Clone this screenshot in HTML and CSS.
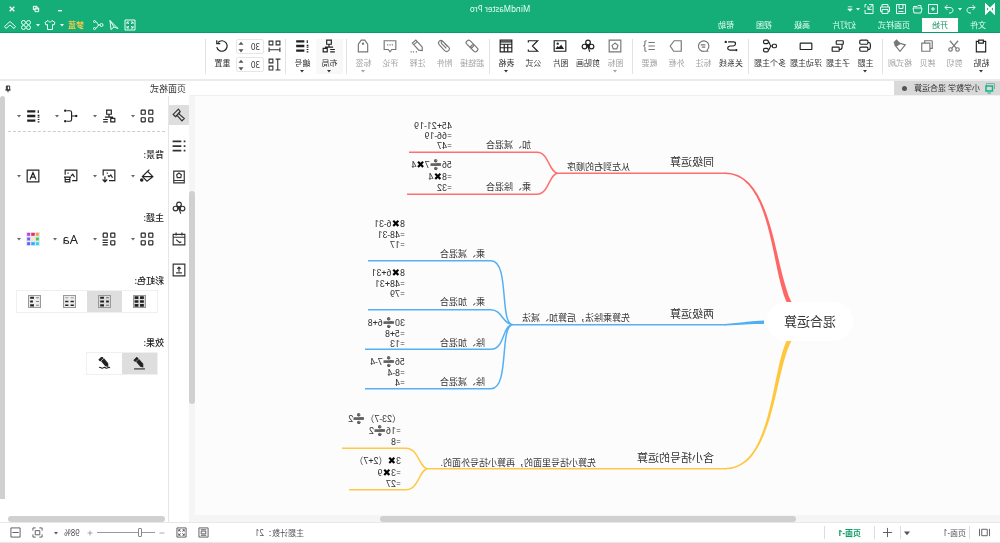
FILE: index.html
```html
<!DOCTYPE html>
<html lang="zh-CN">
<head>
<meta charset="utf-8">
<title>MindMaster Pro</title>
<link rel="stylesheet" href="styles.css">
</head>
<body>
<svg class="sprite" aria-hidden="true">
  <symbol id="caret" viewBox="0 0 8 8"><path d="M0 2h8L4 7z" fill="currentColor" stroke="none"/></symbol>
  <symbol id="logo" viewBox="0 0 24 24"><path d="M4 20V4l8 8 8-8v16l-8-8z" stroke-width="4"/></symbol>
  <symbol id="undo" viewBox="0 0 24 24"><path d="M9 4 4 9l5 5M4 9h10c8 0 8 11 0 11h-2"/></symbol>
  <symbol id="redo" viewBox="0 0 24 24"><path d="m15 4 5 5-5 5M20 9H10c-8 0-8 11 0 11h2"/></symbol>
  <symbol id="new" viewBox="0 0 24 24"><path d="M3 3h18v18H3zM12 8v8M8 12h8"/></symbol>
  <symbol id="open" viewBox="0 0 24 24"><path d="M4 9V5h6l2 2h7v2M2 10h18l-2 10H4z"/></symbol>
  <symbol id="save" viewBox="0 0 24 24"><path d="M3 3h18v18H3zM8 3v8h8V3M7 17h10"/></symbol>
  <symbol id="print" viewBox="0 0 24 24"><path d="M6 8V3h12v5M6 17H3V8h18v9h-3M6 13h12v8H6z"/></symbol>
  <symbol id="export" viewBox="0 0 24 24"><path d="M12 3H4v18h16v-7M5 4l9 9M14 6v7H7M17 3h3v6"/></symbol>
  <symbol id="more" viewBox="0 0 8 8"><path d="M1 1h6M1 4h6L4 7z" fill="currentColor" stroke-width="1"/></symbol>
  <symbol id="min" viewBox="0 0 24 24"><path d="M6 17h12" stroke-width="4"/></symbol>
  <symbol id="restore" viewBox="0 0 24 24"><path d="M9 9V4h11v10h-5M4 9h11v11H4zM4 12h11" stroke-width="3"/></symbol>
  <symbol id="close" viewBox="0 0 24 24"><path d="m5 5 14 14M19 5 5 19" stroke-width="4"/></symbol>
  <symbol id="frame" viewBox="0 0 24 24"><path d="M2 2h20v20H2zM6 10V6h4M14 6h4v4M18 14v4h-4M10 18H6v-4M6 6l4 4M18 6l-4 4M18 18l-4-4M6 18l4-4"/></symbol>
  <symbol id="send" viewBox="0 0 24 24"><path d="M20 3 18 21l-6-5-8 3zM20 3l-8 13"/></symbol>
  <symbol id="share" viewBox="0 0 24 24"><circle cx="5" cy="12" r="3"/><circle cx="19" cy="5" r="2"/><circle cx="19" cy="19" r="2"/><path d="M8 12h2c4 0 3-7 7-7M10 12c4 0 3 7 7 7"/></symbol>
  <symbol id="shirt" viewBox="0 0 24 24"><path d="M8 3 2 7l2 5 3-1v10h10V11l3 1 2-5-6-4c-2 4-6 4-8 0z"/></symbol>
  <symbol id="apps" viewBox="0 0 24 24"><circle cx="7" cy="7" r="4"/><circle cx="17" cy="7" r="4"/><circle cx="7" cy="17" r="4"/><circle cx="17" cy="17" r="4"/></symbol>
  <symbol id="up" viewBox="0 0 24 24"><path d="m1 15 11-10 11 10-3 4-8-7-8 7z"/></symbol>

  <symbol id="paste" viewBox="0 0 24 24"><path d="M8 4H4v18h16V4h-4M8 2h8v5H8z"/></symbol>
  <symbol id="cut" viewBox="0 0 24 24"><circle cx="6" cy="18" r="3"/><circle cx="18" cy="18" r="3"/><path d="M8 16 19 3M16 16 5 3"/></symbol>
  <symbol id="copy" viewBox="0 0 24 24"><path d="M3 3h13v3M3 3v13h3M7 7h14v14H7z"/></symbol>
  <symbol id="painter" viewBox="0 0 24 24"><path d="m3 10 9 11 9-11-5-3-6 1z"/><path d="m12 8 6-6 4 4-4 6z" fill="currentColor"/></symbol>
  <symbol id="topic" viewBox="0 0 24 24"><rect x="7" y="2" width="14" height="7" rx="2"/><rect x="7" y="14" width="14" height="7" rx="2"/><path d="M7 6H5c-3 0-3 12 0 12h2"/></symbol>
  <symbol id="subtopic" viewBox="0 0 24 24"><rect x="3" y="3" width="12" height="6" rx="1"/><rect x="10" y="14" width="12" height="7" rx="1"/><path d="M5 9v5c0 3 2 4 5 4"/></symbol>
  <symbol id="float" viewBox="0 0 24 24"><rect x="2" y="7" width="20" height="11" rx="1"/></symbol>
  <symbol id="multi" viewBox="0 0 24 24"><rect x="1" y="9" width="7" height="6" rx="2"/><rect x="15" y="2" width="8" height="6" rx="2"/><rect x="15" y="16" width="8" height="6" rx="2"/><path d="M8 12h2c3 0 2-7 5-7M10 12c3 0 2 7 5 7"/></symbol>
  <symbol id="relation" viewBox="0 0 24 24"><path d="M7 5h9c5 0 5 6 0 7h-5c-6 0-6 7-1 7h9" transform="matrix(-1 0 0 1 24 0)"/><circle cx="21" cy="5" r="2" fill="currentColor" stroke="none"/><circle cx="3" cy="19" r="2" fill="currentColor" stroke="none"/></symbol>
  <symbol id="callout" viewBox="0 0 24 24"><path d="M5 19a9 9 0 1 1 4 2H4zM8 10h8M8 14h6"/></symbol>
  <symbol id="boundary" viewBox="0 0 24 24"><path d="M3 3h12l7 9-6 9H3z"/></symbol>
  <symbol id="summary" viewBox="0 0 24 24"><path d="M2 6h11M2 12h11M2 18h11M16 3c4 0 3 2 3 6 0 2 1 3 3 3-2 0-3 1-3 3 0 4 1 6-3 6"/></symbol>
  <symbol id="mark" viewBox="0 0 24 24"><path d="M2 2h20v20H2zM12 7l5 4-2 6H9l-2-6z"/></symbol>
  <symbol id="clover" viewBox="0 0 24 24"><circle cx="12" cy="6" r="4"/><circle cx="6" cy="13" r="4"/><circle cx="18" cy="13" r="4"/><path d="M12 9c0 6-1 9-3 13M8 8l4 5 4-5M9 14l3-2 3 2"/></symbol>
  <symbol id="picture" viewBox="0 0 24 24"><path d="M2 3h20v18H2z"/><path d="m5 17 5-7 4 4 2-2 4 5z" fill="currentColor" stroke="none"/><circle cx="16" cy="8" r="2" fill="currentColor" stroke="none"/></symbol>
  <symbol id="sigma" viewBox="0 0 24 24"><path d="M20 6V3H4l9 9-9 9h16v-3"/></symbol>
  <symbol id="table" viewBox="0 0 24 24"><path d="M2 2h20v20H2zM2 9h20M2 15h20M9 9v13M15 9v13M2 5h20"/></symbol>
  <symbol id="link" viewBox="0 0 24 24"><g transform="rotate(-45 12 12)"><rect x="0" y="8" width="13" height="8" rx="3"/><rect x="10" y="8" width="14" height="8" rx="3"/></g></symbol>
  <symbol id="clip" viewBox="0 0 24 24"><path d="m6 13 8-9c4-4 10 1 6 6l-9 10c-5 4-11-2-7-6l9-9c3-2 5 0 3 3l-8 8"/></symbol>
  <symbol id="note" viewBox="0 0 24 24"><path d="m3 14 11-12 6 5L9 19l-6 1zM12 5l6 5M12 22h2M17 22h2M21 22h2"/></symbol>
  <symbol id="comment" viewBox="0 0 24 24"><path d="M2 3h20v15h-7l-3 4-3-4H2zM7 10h2M11 10h2M15 10h2"/></symbol>
  <symbol id="tag" viewBox="0 0 24 24"><path d="M4 22V9l5-7h6l5 7v13z"/><circle cx="12" cy="8" r="1"/></symbol>
  <symbol id="layout" viewBox="0 0 24 24"><path d="M8 2h8v7H8zM12 9v4M5 14h14M2 16h7v6H2zM14 18h8M14 22h8" transform="matrix(-1 0 0 1 24 0)"/></symbol>
  <symbol id="layoutlist" viewBox="0 0 24 24"><path d="M8 2h8v7H8zM12 9v4M5 14h14M2 16h7v6H2zM14 18h8M14 22h8"/></symbol>
  <symbol id="numbering" viewBox="0 0 24 24"><path d="M8 4h14M8 12h14M8 20h14" stroke-width="4"/><path d="M3 2v5M1 11h3M1 14h3M1 18h3M1 22h3"/></symbol>
  <symbol id="hgap" viewBox="0 0 24 24"><path d="M2 2h7v7H2zM15 2h7v7h-7zM2 14v8M22 14v8M2 18h20"/></symbol>
  <symbol id="vgap" viewBox="0 0 24 24"><path d="M15 2h7v7h-7zM15 15h7v7h-7zM1 2h9M1 22h9M6 2v20"/></symbol>
  <symbol id="reset" viewBox="0 0 24 24"><path d="M19 6a9 9 0 1 0 2 8M21 2v6h-6"/></symbol>

  <symbol id="doc" viewBox="0 0 24 24"><path d="M3 14V3h16v4" stroke="#8aa"/><path d="M7 8h13v10H7z" stroke="#10b582" stroke-width="3"/><path d="M10 22h7" stroke="#10b582"/></symbol>
  <symbol id="pin" viewBox="0 0 24 24"><path d="M7 3h10v12H7zM4 15h16M12 15v7M14 3v12" stroke-width="3"/></symbol>
  <symbol id="brush" viewBox="0 0 24 24"><path d="m11 2-9 9 4 4 3-2 8 9 4-4-9-8 2-4zM14 6l-8 9" transform="matrix(-1 0 0 1 24 0)"/></symbol>
  <symbol id="list" viewBox="0 0 24 24"><path d="M8 4h15M8 12h15M8 20h15M1 4h3M1 12h3M1 20h3" stroke-width="3"/></symbol>
  <symbol id="book" viewBox="0 0 24 24"><path d="M3 2h18v20H3zM3 18h18M12 5l4 3-1 5H9L8 8z"/></symbol>
  <symbol id="calendar" viewBox="0 0 24 24"><path d="M2 4h20v18H2zM2 9h20M7 1v5M17 1v5M8 17l3 1 6-5"/></symbol>
  <symbol id="upload" viewBox="0 0 24 24"><path d="M2 2h20v20H2zM7 17h10M12 15V8M9 10l3-3 3 3"/></symbol>
  <symbol id="grid4" viewBox="0 0 24 24"><rect x="2" y="2" width="7" height="7" rx="1"/><rect x="15" y="2" width="7" height="7" rx="1"/><rect x="2" y="15" width="7" height="7" rx="1"/><rect x="15" y="15" width="7" height="7" rx="1"/></symbol>
  <symbol id="grid3" viewBox="0 0 24 24"><rect x="2" y="2" width="7" height="7" rx="1"/><rect x="15" y="2" width="7" height="7" rx="1"/><rect x="2" y="15" width="7" height="7" rx="1"/><path d="M14 14h9M14 18h9M14 22h9"/></symbol>
  <symbol id="bracket" viewBox="0 0 24 24"><path d="M2 12h9M20 3h-6c-2 0-3 1-3 3v12c0 2 1 3 3 3h6"/><circle cx="3" cy="12" r="1"/><circle cx="22" cy="3" r="1"/><circle cx="22" cy="21" r="1"/></symbol>
  <symbol id="bucket" viewBox="0 0 24 24"><path d="m2 13 9-9 9 9-8 8zM11 4 8 1M2 13h18"/><circle cx="21" cy="19" r="2" fill="currentColor"/></symbol>
  <symbol id="picdown" viewBox="0 0 24 24"><path d="M12 20H2V2h20v9M6 15l3-5 3 3 2-2M19 13v9M15 18l4 4 4-4M14 7h2"/></symbol>
  <symbol id="picdel" viewBox="0 0 24 24"><path d="M10 20H2V2h20v8M6 14l3-5 3 3M12 14h12M15 18h7M15 22h7M14 14v8h8v-8M16 7h2"/></symbol>
  <symbol id="watermark" viewBox="0 0 24 24"><path d="M2 2h20v20H2zM7 18l5-12 5 12M9 14h6"/></symbol>
  <symbol id="palette" viewBox="0 0 24 24"><path d="M0 0h24v24H0z" fill="#dfe9f7" stroke="none"/><g stroke-width="5"><path d="M2 4h5" stroke="#ff9d2e"/><path d="M9 4h6" stroke="#f2255e"/><path d="M17 4h5" stroke="#d42ee0"/><path d="M2 12h5" stroke="#43c84e"/><path d="M9 12h6" stroke="#ffe9b0"/><path d="M17 12h5" stroke="#8156f0"/><path d="M2 20h5" stroke="#2bd9d0"/><path d="M9 20h6" stroke="#1fb0ff"/><path d="M17 20h5" stroke="#625bff"/></g></symbol>
  <symbol id="rain1" viewBox="0 0 24 24"><path d="M1 1h22v22H1z" fill="#ddd" stroke="#999"/><path d="M4 5h7M14 5h7M4 12h7M14 12h7M4 19h7M14 19h7" stroke-width="5"/></symbol>
  <symbol id="rain2" viewBox="0 0 24 24"><path d="M1 1h22v22H1z" fill="#ddd" stroke="#999"/><path d="M13 5h7M13 12h7M13 19h7M4 12h5" stroke-width="4"/><path d="M4 5h5M4 19h5" stroke="#666"/></symbol>
  <symbol id="rain3" viewBox="0 0 24 24"><path d="M1 1h22v22H1z" fill="#eee" stroke="#999"/><path d="M4 12h6M14 12h6M4 19h6M14 19h6" stroke-width="3"/><path d="M4 5h6M14 5h6" stroke="#999"/></symbol>
  <symbol id="rain4" viewBox="0 0 24 24"><path d="M1 1h22v22H1z" fill="#eee" stroke="#999"/><path d="M13 5h7M15 12h5M13 19h7" stroke-width="4"/><path d="M4 5h5M4 12h5M4 19h5" stroke="#777"/></symbol>
  <symbol id="pen" viewBox="0 0 24 24"><path d="m6 13 7-8 4 4-7 8-4 1z" fill="currentColor"/><path d="m15 3 2-2 5 5-2 2z" fill="currentColor"/><path d="M2 22h20"/></symbol>
  <symbol id="sketch" viewBox="0 0 24 24"><path d="m6 12 7-8 4 4-7 8-4 1z" fill="currentColor"/><path d="m15 2 2-2 5 5-2 2z" fill="currentColor"/><path d="M2 20c3-3 5 3 8 0s5 3 8 0l4-1"/></symbol>

  <symbol id="slides" viewBox="0 0 24 24"><path d="M6 5h12v14H6zM1 4v16M23 4v16"/></symbol>
  <symbol id="plus" viewBox="0 0 24 24"><path d="M12 2v20M2 12h20"/></symbol>
  <symbol id="minus" viewBox="0 0 24 24"><path d="M2 12h20"/></symbol>
  <symbol id="fitpage" viewBox="0 0 24 24"><path d="M2 2h20v20H2zM7 9h10v6H7zM6 6h12M6 18h12"/></symbol>
  <symbol id="focus" viewBox="0 0 24 24"><path d="M2 8V2h6M16 2h6v6M22 16v6h-6M8 22H2v-6M7 8h10v9H7z"/></symbol>
  <symbol id="fitwidth" viewBox="0 0 24 24"><path d="M2 2h20v20H2zM5 12h14"/></symbol>
</svg>

<div class="app">
  <header class="titlebar">
    <div class="titlerow">
      <div class="quick">
        <svg class="icon-s logo"><use href="#logo"/></svg>
        <button aria-label="撤销"><svg class="icon-s"><use href="#undo"/></svg></button>
        <button aria-label="撤销列表" class="drop"><svg class="caret"><use href="#caret"/></svg></button>
        <button aria-label="重做"><svg class="icon-s"><use href="#redo"/></svg></button>
        <button aria-label="新建"><svg class="icon-s"><use href="#new"/></svg></button>
        <button aria-label="打开"><svg class="icon-s"><use href="#open"/></svg></button>
        <button aria-label="保存"><svg class="icon-s"><use href="#save"/></svg></button>
        <button aria-label="打印"><svg class="icon-s"><use href="#print"/></svg></button>
        <button aria-label="导出"><svg class="icon-s"><use href="#export"/></svg></button>
        <button aria-label="导出选项" class="drop"><svg class="caret"><use href="#caret"/></svg></button>
        <button aria-label="更多" class="more"><svg class="icon-t"><use href="#more"/></svg></button>
      </div>
      <h1 class="apptitle">MindMaster Pro</h1>
      <div class="winbuttons">
        <button aria-label="最小化"><svg class="icon-w"><use href="#min"/></svg></button>
        <button aria-label="还原"><svg class="icon-w"><use href="#restore"/></svg></button>
        <button aria-label="关闭"><svg class="icon-w"><use href="#close"/></svg></button>
      </div>
    </div>
    <nav class="menurow">
      <button class="menu">文件</button>
      <button class="menu menu-on">开始</button>
      <button class="menu">页面样式</button>
      <button class="menu">幻灯片</button>
      <button class="menu">高级</button>
      <button class="menu">视图</button>
      <button class="menu">帮助</button>
      <div class="account">
        <button aria-label="全屏"><svg class="icon-s"><use href="#frame"/></svg></button>
        <button aria-label="发送"><svg class="icon-s"><use href="#send"/></svg></button>
        <button aria-label="分享"><svg class="icon-s"><use href="#share"/></svg></button>
        <button class="user">梦蓝</button>
        <svg class="caret"><use href="#caret"/></svg>
        <button aria-label="皮肤"><svg class="icon-s"><use href="#shirt"/></svg></button>
        <svg class="caret"><use href="#caret"/></svg>
        <button aria-label="应用"><svg class="icon-s"><use href="#apps"/></svg></button>
        <button aria-label="收起"><svg class="icon-s"><use href="#up"/></svg></button>
      </div>
    </nav>
  </header>

  <div class="ribbon">
    <div class="group">
      <button class="tool"><svg class="icon"><use href="#paste"/></svg><span>粘贴</span><svg class="caret"><use href="#caret"/></svg></button>
      <button class="tool off"><svg class="icon"><use href="#cut"/></svg><span>剪切</span></button>
      <button class="tool off"><svg class="icon"><use href="#copy"/></svg><span>拷贝</span></button>
      <button class="tool off"><svg class="icon"><use href="#painter"/></svg><span>格式刷</span></button>
    </div>
    <div class="group">
      <button class="tool"><svg class="icon"><use href="#topic"/></svg><span>主题</span><svg class="caret"><use href="#caret"/></svg></button>
      <button class="tool"><svg class="icon"><use href="#subtopic"/></svg><span>子主题</span></button>
      <button class="tool"><svg class="icon"><use href="#float"/></svg><span>浮动主题</span></button>
      <button class="tool"><svg class="icon"><use href="#multi"/></svg><span>多个主题</span></button>
    </div>
    <div class="group">
      <button class="tool"><svg class="icon"><use href="#relation"/></svg><span>关系线</span></button>
      <button class="tool off"><svg class="icon"><use href="#callout"/></svg><span>标注</span></button>
      <button class="tool off"><svg class="icon"><use href="#boundary"/></svg><span>外框</span></button>
      <button class="tool off"><svg class="icon"><use href="#summary"/></svg><span>概要</span></button>
    </div>
    <div class="group">
      <button class="tool off"><svg class="icon"><use href="#mark"/></svg><span>图标</span><svg class="caret"><use href="#caret"/></svg></button>
      <button class="tool"><svg class="icon"><use href="#clover"/></svg><span>剪贴画</span></button>
      <button class="tool"><svg class="icon"><use href="#picture"/></svg><span>图片</span></button>
      <button class="tool"><svg class="icon"><use href="#sigma"/></svg><span>公式</span></button>
      <button class="tool"><svg class="icon"><use href="#table"/></svg><span>表格</span><svg class="caret"><use href="#caret"/></svg></button>
    </div>
    <div class="group">
      <button class="tool off"><svg class="icon"><use href="#link"/></svg><span>超链接</span></button>
      <button class="tool off"><svg class="icon"><use href="#clip"/></svg><span>附件</span></button>
      <button class="tool off"><svg class="icon"><use href="#note"/></svg><span>注释</span></button>
      <button class="tool off"><svg class="icon"><use href="#comment"/></svg><span>评论</span></button>
      <button class="tool off"><svg class="icon"><use href="#tag"/></svg><span>标签</span><svg class="caret"><use href="#caret"/></svg></button>
    </div>
    <div class="group">
      <button class="tool tool-hover"><svg class="icon"><use href="#layout"/></svg><span>布局</span><svg class="caret"><use href="#caret"/></svg></button>
      <button class="tool"><svg class="icon"><use href="#numbering"/></svg><span>编号</span><svg class="caret"><use href="#caret"/></svg></button>
    </div>
    <div class="group">
      <div class="spacing">
        <label for="hspace" aria-label="水平间距"><svg class="icon-m"><use href="#hgap"/></svg></label>
        <div class="spin"><input id="hspace" type="text" value="30"><div class="arrows"><button aria-label="增加" class="inc"><svg><use href="#caret"/></svg></button><button aria-label="减少"><svg><use href="#caret"/></svg></button></div></div>
        <label for="vspace" aria-label="垂直间距"><svg class="icon-m"><use href="#vgap"/></svg></label>
        <div class="spin"><input id="vspace" type="text" value="30"><div class="arrows"><button aria-label="增加" class="inc"><svg><use href="#caret"/></svg></button><button aria-label="减少"><svg><use href="#caret"/></svg></button></div></div>
      </div>
      <button class="tool"><svg class="icon"><use href="#reset"/></svg><span>重置</span></button>
    </div>
  </div>

  <div class="workspace">
    <main class="editor">
      <div class="doctabs">
        <button class="doctab"><svg class="icon-s"><use href="#doc"/></svg><span>小学数学 混合运算</span><i class="dot"></i></button>
      </div>
      <div class="viewport">
        <div class="canvas">
          <svg class="edges" viewBox="0 96 805 419">
            <g fill="#ff6767"><path d="M208 303C226 271 226 172.500 275 172.500V174C228 174 229 271 213 303z"/></g>
            <g fill="#50aef2"><path d="M236 320.500 245 321 275 324V325.500L245 324 236 324z"/></g>
            <g fill="#ffc73e"><path d="M208 340C226 371 226 469.500 275 469.500V468C228 468 229 371 213 340z"/></g>
            <g stroke="#ff6f6f" stroke-width="1.500"><path d="M274 173.250H442C451 173.250 451 152.250 463 152.250H591M442 173.250C451 173.250 451 194.250 463 194.250H593"/></g>
            <g stroke="#55b0f3" stroke-width="1.500"><path d="M274 324.750H487C501 324.750 490 260.750 509 260.750H632M487 324.750C497 324.750 498 309.750 509 309.750H632M487 324.750C498 324.750 495 349.250 509 349.250H635M487 324.750C501 324.750 490 388.750 509 388.750H635"/></g>
            <g stroke="#ffc845" stroke-width="1.500"><path d="M274 468.750H572C581 468.750 581 448.250 594 448.250H658M572 468.750C581 468.750 581 489.750 594 489.750H651"/></g>
          </svg>
          <div class="node root">混合运算</div>
          <div class="node main n1">同级运算</div>
          <div class="node main n2">两级运算</div>
          <div class="node main n3">含小括号的运算</div>
          <div class="node n11">从左到右的顺序</div>
          <div class="node n21">先算乘除法，后算加、减法</div>
          <div class="node n31">先算小括号里面的，再算小括号外面的.</div>
          <div class="node n111">加、减混合</div>
          <div class="node n112">乘、除混合</div>
          <div class="node n211">乘、减混合</div>
          <div class="node n212">乘、加混合</div>
          <div class="node n213">除、加混合</div>
          <div class="node n214">除、减混合</div>
          <div class="node calc c1"><p>45+21-19</p><p>=66-19</p><p>=47</p></div>
          <div class="node calc c2"><p class="tall">56<b>➗</b>7<b>✖</b>4</p><p class="tall">=8<b>✖</b>4</p><p>=32</p></div>
          <div class="node calc c3"><p class="tall">8<b>✖</b>6-31</p><p>=48-31</p><p>=17</p></div>
          <div class="node calc c4"><p class="tall">8<b>✖</b>6+31</p><p>=48+31</p><p>=79</p></div>
          <div class="node calc c5"><p class="tall">30<b>➗</b>6+8</p><p>=5+8</p><p>=13</p></div>
          <div class="node calc c6"><p class="tall">56<b>➗</b>7-4</p><p>=8-4</p><p>=4</p></div>
          <div class="node calc c7"><p class="tall">（23-7）<b>➗</b>2</p><p class="tall">=16<b>➗</b>2</p><p>=8</p></div>
          <div class="node calc c8"><p class="tall">3<b>✖</b>（2+7）</p><p class="tall">=3<b>✖</b>9</p><p>=27</p></div>
        </div>
        <div class="vtrack"><div class="thumb"></div></div>
      </div>
      <div class="htrack"><div class="thumb"></div></div>
    </main>

    <aside class="panel">
      <div class="panelhead"><h2>页面格式</h2><button aria-label="固定"><svg class="icon-p"><use href="#pin"/></svg></button></div>
      <div class="panelbody">
        <div class="strip">
          <button class="on" aria-label="格式"><svg class="icon"><use href="#brush"/></svg></button>
          <button aria-label="大纲"><svg class="icon"><use href="#list"/></svg></button>
          <button aria-label="图标"><svg class="icon"><use href="#book"/></svg></button>
          <button aria-label="剪贴画"><svg class="icon"><use href="#clover"/></svg></button>
          <button aria-label="任务"><svg class="icon"><use href="#calendar"/></svg></button>
          <button aria-label="附件"><svg class="icon"><use href="#upload"/></svg></button>
        </div>
        <div class="props">
          <div class="options first">
            <button aria-label="布局"><svg class="icon"><use href="#grid4"/></svg><svg class="caret"><use href="#caret"/></svg></button>
            <button aria-label="方向"><svg class="icon"><use href="#layoutlist"/></svg><svg class="caret"><use href="#caret"/></svg></button>
            <button aria-label="连线"><svg class="icon"><use href="#bracket"/></svg><svg class="caret"><use href="#caret"/></svg></button>
            <button aria-label="编号"><svg class="icon"><use href="#numbering"/></svg><svg class="caret"><use href="#caret"/></svg></button>
          </div>
          <h3>背景:</h3>
          <div class="options">
            <button aria-label="填充"><svg class="icon"><use href="#bucket"/></svg><svg class="caret"><use href="#caret"/></svg></button>
            <button aria-label="背景图"><svg class="icon"><use href="#picdown"/></svg><svg class="caret"><use href="#caret"/></svg></button>
            <button aria-label="移除背景图"><svg class="icon"><use href="#picdel"/></svg></button>
            <button aria-label="水印"><svg class="icon"><use href="#watermark"/></svg><svg class="caret"><use href="#caret"/></svg></button>
          </div>
          <h3>主题:</h3>
          <div class="options">
            <button aria-label="主题样式"><svg class="icon"><use href="#grid4"/></svg><svg class="caret"><use href="#caret"/></svg></button>
            <button aria-label="主题布局"><svg class="icon"><use href="#grid3"/></svg><svg class="caret"><use href="#caret"/></svg></button>
            <button class="font">Aa<svg class="caret"><use href="#caret"/></svg></button>
            <button aria-label="主题颜色"><svg class="icon"><use href="#palette"/></svg><svg class="caret"><use href="#caret"/></svg></button>
          </div>
          <h3 class="tight">彩虹色:</h3>
          <div class="segments">
            <button aria-label="彩虹色一"><svg class="icon-m"><use href="#rain1"/></svg></button>
            <button aria-label="彩虹色二" class="on"><svg class="icon-m"><use href="#rain2"/></svg></button>
            <button aria-label="彩虹色三"><svg class="icon-m"><use href="#rain3"/></svg></button>
            <button aria-label="彩虹色四"><svg class="icon-m"><use href="#rain4"/></svg></button>
          </div>
          <h3 class="tight">效果:</h3>
          <div class="segments">
            <button aria-label="常规" class="on"><svg class="icon-m"><use href="#pen"/></svg></button>
            <button aria-label="手绘"><svg class="icon-m"><use href="#sketch"/></svg></button>
          </div>
          <div class="ptrack"></div>
        </div>
        <div class="pvtrack"></div>
      </div>
    </aside>
  </div>

  <footer class="status">
    <button class="slides" aria-label="页面列表"><svg class="icon-w"><use href="#slides"/></svg></button>
    <button class="pagepick"><span>页面-1</span><svg class="caret"><use href="#caret"/></svg></button>
    <button class="addpage" aria-label="新增页面"><svg class="icon-w"><use href="#plus"/></svg></button>
    <button class="page-on">页面-1</button>
    <div class="statusright">
      <span class="count">主题计数：21</span>
      <button aria-label="适应页面"><svg class="icon-w"><use href="#fitpage"/></svg></button>
      <button aria-label="全屏" class="full"><svg class="icon-w"><use href="#frame"/></svg></button>
      <button aria-label="缩小"><svg class="icon-t"><use href="#minus"/></svg></button>
      <input type="range" aria-label="缩放" min="0" max="100" value="24">
      <button aria-label="放大"><svg class="icon-t"><use href="#plus"/></svg></button>
      <button class="zoom"><span>98%</span><svg class="caret"><use href="#caret"/></svg></button>
      <button aria-label="聚焦" class="full"><svg class="icon-w"><use href="#focus"/></svg></button>
      <button aria-label="适应宽度"><svg class="icon-w"><use href="#fitwidth"/></svg></button>
    </div>
  </footer>
</div>
</body>
</html>
```

FILE: styles.css
```css
* { box-sizing: border-box; }
body {
  margin: 0;
  font: 8px/12px "Noto Sans", "Noto Sans CJK SC", sans-serif;
  color: #333;
  background: #fff;
  overflow: hidden;
}
h1, h2, h3, p { margin: 0; font-weight: 400; font-size: inherit; }
button {
  display: flex;
  align-items: center;
  justify-content: center;
  padding: 0;
  border: 0;
  background: none;
  color: inherit;
  font: inherit;
  white-space: nowrap;
}
svg { display: block; flex: none; fill: none; stroke: currentColor; stroke-width: 2; }
.sprite { position: absolute; width: 0; height: 0; }
.icon { width: 14px; height: 14px; }
.icon-m { width: 13px; height: 13px; }
.icon-s { width: 12px; height: 12px; }
.icon-w { width: 11px; height: 11px; }
.icon-p { width: 8px; height: 8px; }
.icon-t { width: 6px; height: 6px; }
.caret { width: 4px; height: 4px; }

/* the whole window is shown flipped left to right */
.app {
  display: flex;
  flex-direction: column;
  height: 100vh;
  transform: scaleX(-1);
}

/* title bar */
.titlebar { background: #15ae79; color: #e6fff5; border-bottom: 1px solid #0a9d69; }
.titlerow { display: grid; grid-template-columns: 1fr auto 1fr; align-items: center; height: 18px; }
.quick { display: flex; align-items: center; padding-left: 4px; }
.quick button { width: 16px; height: 14px; }
.quick .logo { margin-right: 5px; color: #fff; }
.quick .drop { width: 6px; }
.quick .more { width: 9px; }
.apptitle { font-size: 8px; }
.winbuttons { display: flex; justify-content: flex-end; color: #fff; }
.winbuttons button { width: 24px; height: 14px; }
.winbuttons svg { width: 8px; height: 8px; }
.menurow { display: flex; gap: 2px; height: 14px; padding-left: 4px; }
.menu { padding: 0 10px; }
.menu-on { background: #fff; color: #15945f; }
.account { display: flex; align-items: center; gap: 4px; margin-left: auto; padding-right: 4px; }
.account .user { color: #f3c94c; font-weight: 700; padding-left: 4px; }

/* ribbon */
.ribbon { display: flex; height: 48px; padding: 6px 0 0 2px; border-bottom: 2px solid #ebebeb; }
.group { display: flex; height: 35px; padding: 0 3px; border-right: 1px solid #e3e3e3; }
.tool { flex-direction: column; justify-content: flex-start; min-width: 27px; padding: 0 2px; }
.tool .icon { margin-bottom: 4px; color: #222; }
.off { color: #a2a2a2; }
.off .icon { color: #777; }
.tool-hover { background: #f8f8f8; }
.spacing { display: grid; grid-template-columns: 14px 28px; gap: 3px 4px; align-content: start; align-items: center; justify-items: center; }
.spin { display: flex; width: 28px; height: 15px; border: 1px solid #e6e6e6; border-radius: 2px; }
.spin input { width: 17px; min-width: 0; padding: 0 0 0 3px; border: 0; background: none; font: inherit; color: inherit; }
.arrows { display: grid; align-content: center; gap: 2px; width: 9px; justify-items: center; color: #555; }
.arrows svg { width: 6px; height: 5px; }
.inc svg { transform: rotate(180deg); }

/* editor */
.workspace { display: flex; flex: 1; min-height: 0; }
.editor { display: flex; flex: 1; flex-direction: column; min-width: 0; }
.doctabs { display: flex; height: 15px; border-bottom: 1px solid #f0f0f0; }
.doctab { gap: 4px; padding: 0 8px 0 4px; background: #d9d9d9; color: #333; }
.dot { width: 5px; height: 5px; margin-left: 3px; border-radius: 50%; background: #555; }
.viewport { display: flex; flex: 1; min-height: 0; }
.canvas { position: relative; flex: 1; overflow: hidden; background: #fcfcfc; }
.edges { position: absolute; left: 0; top: 0; width: 805px; height: 419px; stroke: none; }
.node { position: absolute; font-size: 9px; line-height: 12px; white-space: nowrap; }
.main { left: 286px; font-size: 11px; line-height: 14px; }
.root {
  left: 147px;
  top: 206px;
  padding: 0 17px;
  border-radius: 20px;
  background: #fff;
  font-size: 13px;
  line-height: 39px;
}
.n1 { top: 59px; }
.n2 { top: 211px; }
.n3 { top: 355px; }
.n11 { left: 370px; top: 65px; }
.n21 { left: 370px; top: 216px; }
.n31 { left: 404px; top: 361px; }
.n111, .n112 { left: 469px; }
.n111 { top: 43px; }
.n112 { top: 85px; }
.n211, .n212, .n213, .n214 { left: 515px; }
.n211 { top: 152px; }
.n212 { top: 200px; }
.n213 { top: 241px; }
.n214 { top: 280px; }
.calc { font-family: Roboto, "Noto Sans CJK SC", sans-serif; line-height: 10px; }
.calc p { height: 10px; }
.calc .tall { display: flex; align-items: center; height: 12px; }
.calc b { font: 10px/10px "DejaVu Sans", sans-serif; color: #000; }
.c1, .c2 { left: 548px; }
.c1 { top: 25px; }
.c2 { top: 63px; }
.c3, .c4, .c5, .c6 { left: 595px; }
.c3 { top: 122px; }
.c4 { top: 171px; }
.c5 { top: 221px; }
.c6 { top: 260px; }
.c7, .c8 { left: 599px; }
.c7 { top: 317px; }
.c8 { top: 359px; }

/* scroll bars */
.thumb { border-radius: 3px; background: #d0d0d0; }
.vtrack { display: grid; grid-template-rows: 95fr 213fr 111fr; width: 6px; background: #f5f5f5; }
.vtrack .thumb { grid-row: 2; }
.htrack { display: grid; grid-template-columns: 204fr 416fr 191fr; height: 7px; padding-top: 1px; background: #f5f5f5; }
.htrack .thumb { grid-column: 2; }

/* side panel */
.panel { display: flex; flex-direction: column; width: 189px; }
.panelhead { display: flex; align-items: center; justify-content: space-between; height: 15px; padding: 0 4px 0 3px; }
.panelhead h2 { font-size: 9px; }
.panelbody { display: flex; flex: 1; min-height: 0; }
.strip { display: flex; flex-direction: column; gap: 11px; width: 21px; padding-top: 9px; border-right: 1px solid #e6e6e6; color: #333; }
.strip button { height: 20px; }
.on { background: #dedede; }
.props { display: flex; flex: 1; flex-direction: column; min-width: 0; padding: 11px 3px 0; color: #222; }
.options { display: flex; height: 18px; padding-left: 11px; margin-bottom: 26px; }
.options button { flex: none; justify-content: flex-start; gap: 5px; width: 38px; }
.options .caret { color: #666; }
.first { height: 25px; padding-bottom: 7px; margin-bottom: 16px; border-bottom: 1px dashed #ccc; }
.font { font-size: 13px; }
.props h3 { padding-left: 1px; margin-bottom: 5px; font-size: 9px; line-height: 14px; font-weight: 500; }
.props .tight { margin-bottom: 2px; }
.segments { display: flex; align-self: flex-start; height: 23px; margin: 0 0 23px 7px; border: 1px solid #f0f0f0; }
.segments button { width: 35px; }
.ptrack { height: 6px; margin-top: auto; border-radius: 3px; background: #d0d0d0; }
.pvtrack { width: 5px; margin-bottom: 23px; border-radius: 3px 3px 0 0; background: #d0d0d0; }

/* status bar */
.status { display: flex; align-items: center; height: 21px; border-top: 1px solid #e8e8e8; border-bottom: 1px solid #e8e8e8; color: #555; }
.status > button { height: 13px; border-right: 1px solid #ddd; }
.status .slides { width: 31px; }
.status .pagepick { justify-content: space-between; width: 69px; padding: 0 3px; }
.pagepick .caret { width: 6px; height: 6px; }
.status .addpage { width: 26px; }
.status .page-on { width: 50px; color: #0d9c68; font-weight: 700; }
.statusright { display: flex; align-items: center; gap: 4px; margin-left: auto; padding-right: 10px; }
.count { margin-right: 42px; }
.full { margin: 0 7px; }
.statusright input {
  appearance: none;
  width: 58px;
  height: 10px;
  margin: 0;
  background: linear-gradient(#999, #999) center / 100% 1px no-repeat;
}
.statusright input::-webkit-slider-thumb {
  appearance: none;
  width: 4px;
  height: 9px;
  border: 1px solid #888;
  border-radius: 1px;
  background: #fff;
}
.zoom { gap: 6px; margin-left: 3px; }
```
